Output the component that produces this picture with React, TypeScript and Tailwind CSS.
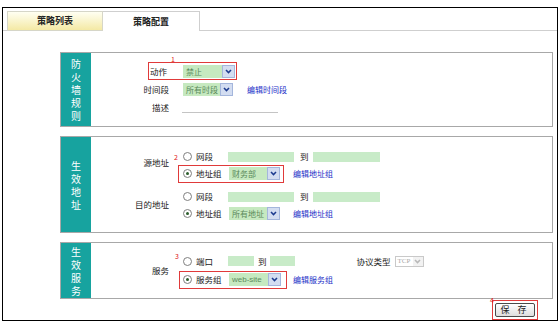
import React from 'react';

const FONT = '"Noto Sans CJK SC", "Liberation Sans", sans-serif';

const Chevron = ({ color = '#1d3b8f' }: { color?: string }) => (
  <svg width="7" height="5" viewBox="0 0 7 5">
    <path d="M1 1 L3.5 3.6 L6 1" fill="none" stroke={color} strokeWidth="1.5" />
  </svg>
);

const Select = ({ text, width }: { text: string; width: number }) => (
  <div className="flex h-[13px] bg-[#c6e9c0]" style={{ width }}>
    <span className="flex-1 pl-[3px] text-[8px] leading-[13px] text-[#5b8a5b] whitespace-nowrap overflow-hidden">{text}</span>
    <span className="w-[13px] h-[13px] bg-[#d3ddf1] border border-[#a4b6dc] flex items-center justify-center shrink-0">
      <Chevron />
    </span>
  </div>
);

const Green = ({ width }: { width: number }) => (
  <div className="h-[10px] bg-[#c8ebc8]" style={{ width }} />
);

const Radio = ({ checked }: { checked?: boolean }) => (
  <span className="w-[9px] h-[9px] rounded-full border border-[#7f7f7f] bg-white flex items-center justify-center shrink-0">
    {checked && <span className="w-[3px] h-[3px] rounded-full bg-[#2c5e2c]" />}
  </span>
);

const RadioCell = ({ checked, label }: { checked?: boolean; label: string }) => (
  <div className="w-[45px] flex items-center">
    <Radio checked={checked} />
    <span className="ml-[4px] text-[8.5px] text-[#222]">{label}</span>
  </div>
);

const Link = ({ children }: { children: React.ReactNode }) => (
  <span className="text-[8px] text-[#2530c8] whitespace-nowrap">{children}</span>
);

const Mark = ({ n, className }: { n: string; className: string }) => (
  <span className={`absolute text-[7px] leading-[7px] text-[#e02020] ${className}`}>{n}</span>
);

// gray framed block with the teal vertical caption on the left
const Panel = ({ title, h, children }: { title: string; h: number; children: React.ReactNode }) => (
  <div className="ml-[57px] w-[493px] flex border border-[#a8a8a8]" style={{ height: h }}>
    <div className="w-[30px] bg-[#17a39f] flex flex-col items-center justify-center">
      <span className="w-[11px] text-white text-[10px] leading-[13px] text-center break-all">{title}</span>
    </div>
    <div className="flex-1 relative">{children}</div>
  </div>
);

export default function App() {
  return (
    <div className="w-[560px] h-[324px] bg-white pt-[7px] pl-[2px]" style={{ fontFamily: FONT }}>
      <div className="w-[556px] h-[314px] border border-black">
        {/* tabs */}
        <div className="mt-[3px] flex h-[20px]">
          <div className="w-[4px] border-b border-[#cfcfcf]" />
          <div className="w-[96px] flex items-center justify-center bg-gradient-to-b from-[#fffff2] to-[#f4e9a4] border border-[#d6d6c8] text-[9px] font-bold text-[#222]">
            策略列表
          </div>
          <div className="w-[97px] flex items-center justify-center bg-white border-t border-r border-[#cfcfcf] text-[9px] font-bold text-[#222]">
            策略配置
          </div>
          <div className="flex-1 border-b border-[#cfcfcf]" />
        </div>

        {/* 防火墙规则 */}
        <div className="mt-[21px]">
          <Panel title="防火墙规则" h={75}>
            <div className="pt-[9px] text-[8.5px] text-[#222]">
              <div className="flex items-center h-[18px]">
                <span className="w-[76px] text-right">动作</span>
                <span className="ml-[16px]"><Select text="禁止" width={52} /></span>
              </div>
              <div className="flex items-center h-[18px]">
                <span className="w-[78px] text-right">时间段</span>
                <span className="ml-[14px]"><Select text="所有时段" width={50} /></span>
                <span className="ml-[14px]"><Link>编辑时间段</Link></span>
              </div>
              <div className="flex items-center h-[18px]">
                <span className="w-[78px] text-right">描述</span>
                <span className="ml-[13px] mt-[10px] w-[96px] border-b border-[#c4c4c4]" />
              </div>
            </div>
            <div className="absolute left-[57px] top-[9px] w-[89px] h-[18px] border border-[#e03a3a]" />
            <Mark n="1" className="left-[80px] top-[3px]" />
          </Panel>
        </div>

        {/* 生效地址 */}
        <div className="mt-[9px]">
          <Panel title="生效地址" h={97}>
            <div className="pt-[11px] text-[8.5px] text-[#222]">
              <div className="flex items-center">
                <span className="w-[78px] text-right -mt-[6px]">源地址</span>
                <div className="ml-[14px] flex flex-col">
                  <div className="flex items-center h-[17px]">
                    <RadioCell label="网段" />
                    <Green width={66} />
                    <span className="ml-[6px]">到</span>
                    <span className="ml-[4px]"><Green width={67} /></span>
                  </div>
                  <div className="flex items-center h-[17px]">
                    <RadioCell checked label="地址组" />
                    <span className="ml-[1px]"><Select text="财务部" width={51} /></span>
                    <span className="ml-[13px]"><Link>编辑地址组</Link></span>
                  </div>
                </div>
              </div>
              <div className="flex items-center mt-[6px]">
                <span className="w-[78px] text-right">目的地址</span>
                <div className="ml-[14px] flex flex-col">
                  <div className="flex items-center h-[17px]">
                    <RadioCell label="网段" />
                    <Green width={66} />
                    <span className="ml-[6px]">到</span>
                    <span className="ml-[4px]"><Green width={67} /></span>
                  </div>
                  <div className="flex items-center h-[16px]">
                    <RadioCell checked label="地址组" />
                    <span className="ml-[1px]"><Select text="所有地址" width={51} /></span>
                    <span className="ml-[13px]"><Link>编辑地址组</Link></span>
                  </div>
                </div>
              </div>
            </div>
            <div className="absolute left-[87px] top-[28px] w-[106px] h-[18px] border border-[#e03a3a]" />
            <Mark n="2" className="left-[83px] top-[17px]" />
          </Panel>
        </div>

        {/* 生效服务 */}
        <div className="mt-[9px]">
          <Panel title="生效服务" h={57}>
            <div className="pt-[9px] text-[8.5px] text-[#222] flex items-center">
              <span className="w-[78px] text-right">服务</span>
              <div className="ml-[14px] flex flex-col">
                <div className="flex items-center h-[18px]">
                  <RadioCell label="端口" />
                  <Green width={26} />
                  <span className="ml-[4px]">到</span>
                  <span className="ml-[3px]"><Green width={25} /></span>
                  <span className="ml-[62px]">协议类型</span>
                  <div className="ml-[4px] flex h-[11px] w-[29px] border border-[#c9c9c9] bg-white">
                    <span className="flex-1 pl-[2px] text-[7px] leading-[9px] text-[#a8a8a8]" style={{ fontFamily: '"Liberation Serif", serif' }}>TCP</span>
                    <span className="w-[10px] flex items-center justify-center bg-[#f2f2f2]"><Chevron color="#b8b8b8" /></span>
                  </div>
                </div>
                <div className="flex items-center h-[18px]">
                  <RadioCell checked label="服务组" />
                  <span className="ml-[1px]">
                    <div className="flex h-[13px] w-[52px] bg-[#c6e9c0]">
                      <span className="flex-1 pl-[3px] text-[8px] leading-[13px] text-[#5b8a5b] whitespace-nowrap" style={{ fontFamily: '"Liberation Sans", sans-serif' }}>web-site</span>
                      <span className="w-[13px] h-[13px] bg-[#d3ddf1] border border-[#a4b6dc] flex items-center justify-center shrink-0"><Chevron /></span>
                    </div>
                  </span>
                  <span className="ml-[12px]"><Link>编辑服务组</Link></span>
                </div>
              </div>
            </div>
            <div className="absolute left-[88px] top-[28px] w-[108px] h-[18px] border border-[#e03a3a]" />
            <Mark n="3" className="left-[84px] top-[10px]" />
          </Panel>
        </div>

        {/* save */}
        <div className="mt-[1px] flex justify-end pr-[19px]">
          <div className="relative w-[46px] h-[20px] border border-[#e03a3a] px-[2px] py-[2px]">
            <Mark n="4" className="-left-[3px] -top-[4px]" />
            <div className="w-full h-full border border-[#4a4a4a] rounded-[2px] bg-gradient-to-b from-white to-[#dedede] flex items-center justify-center text-[9px] text-[#222] tracking-[3px]">
              保 存
            </div>
          </div>
        </div>
      </div>
    </div>
  );
}
